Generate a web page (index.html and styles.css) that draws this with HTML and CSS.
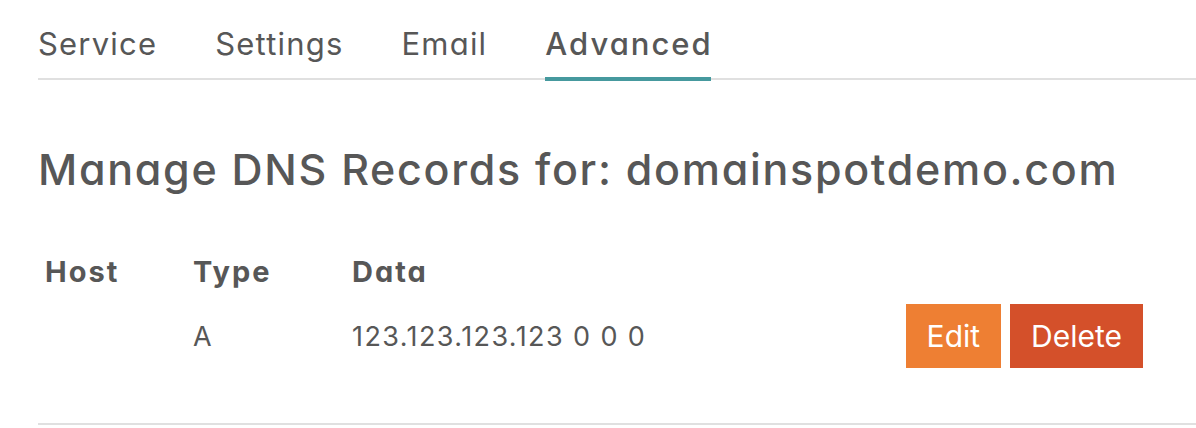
FILE: index.html
```html
<!DOCTYPE html>
<html lang="en">
<head>
<meta charset="utf-8">
<title>Advanced - DNS Records</title>
<link rel="stylesheet" href="styles.css">
</head>
<body>
<div class="page">
  <nav class="tabs">
    <a class="tab" href="#">Service</a>
    <a class="tab" href="#">Settings</a>
    <a class="tab" href="#">Email</a>
    <a class="tab active" href="#">Advanced</a>
  </nav>
  <h1 class="title">Manage DNS Records for: domainspotdemo.com</h1>
  <div class="records">
    <div class="row head">
      <div class="cell">Host</div>
      <div class="cell">Type</div>
      <div class="cell">Data</div>
      <div class="cell"></div>
    </div>
    <div class="row item">
      <div class="cell"></div>
      <div class="cell">A</div>
      <div class="cell">123.123.123.123 0 0 0</div>
      <div class="cell actions">
        <button class="btn btn-edit">Edit</button>
        <button class="btn btn-delete">Delete</button>
      </div>
    </div>
  </div>
</div>
</body>
</html>
```

FILE: styles.css
```css
html, body {
  margin: 0;
  padding: 0;
  background: #ffffff;
}

body {
  font-family: Inter, "Noto Sans", sans-serif;
  font-feature-settings: "cv11" 1;
  color: #575757;
}

.page {
  padding-left: 38px;
}

.tabs {
  display: flex;
  gap: 58px;
  padding-top: 24px;
  border-bottom: 2px solid #e0e0e0;
}

.tab {
  position: relative;
  display: block;
  font-size: 31px;
  line-height: 40px;
  letter-spacing: 1.2px;
  padding-bottom: 14px;
  color: #575757;
  text-decoration: none;
  font-weight: 400;
}

.tab.active {
  font-weight: 500;
  letter-spacing: 2px;
}

.tab.active::after {
  content: "";
  position: absolute;
  left: 0;
  right: 2px;
  bottom: -3px;
  height: 4px;
  background: #46999e;
}

.title {
  margin: 63px 0 0;
  font-size: 43px;
  line-height: 52px;
  letter-spacing: 1.7px;
  font-weight: 500;
  color: #575757;
}

.records {
  margin-top: 59px;
  padding: 0 53px 0 7px;
  border-bottom: 2px solid #e0e0e0;
}

.row {
  display: grid;
  grid-template-columns: 148px 159px 1fr auto;
  align-items: center;
}

.row.head {
  font-size: 29px;
  line-height: 36px;
  letter-spacing: 2px;
  font-weight: 700;
}

.row.item {
  margin-top: 14px;
  margin-bottom: 55px;
  font-size: 27px;
  line-height: 32px;
  letter-spacing: 1.4px;
  height: 64px;
}

.row.item .cell {
  padding-top: 2px;
}

.row.item .actions {
  padding-top: 0;
  display: flex;
  gap: 9px;
  letter-spacing: 0;
}

.btn {
  font-family: Inter, "Liberation Sans", sans-serif;
  font-feature-settings: normal;
  height: 64px;
  padding: 0 21px;
  border: 0;
  border-radius: 0;
  color: #ffffff;
  font-size: 30px;
  font-weight: 400;
  letter-spacing: 0;
  cursor: pointer;
}

.btn-edit {
  background: #ee7f33;
}

.btn-delete {
  background: #d4502a;
}
```
